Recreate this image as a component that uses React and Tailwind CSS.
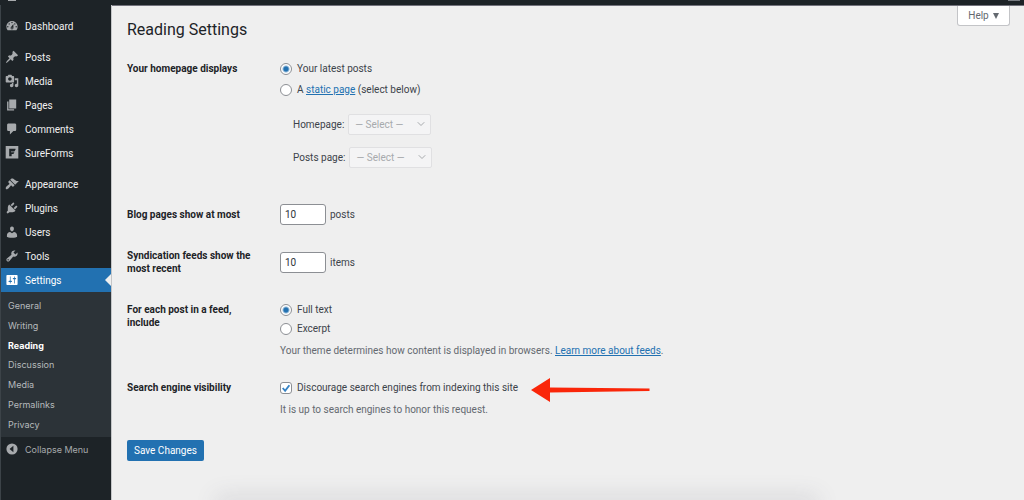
import { ChevronDown } from "lucide-react";

const icons = {
  dashboard:
    "M3.76 16h12.48c1.1-1.37 1.76-3.11 1.76-5 0-4.42-3.58-8-8-8s-8 3.58-8 8c0 1.89.66 3.63 1.76 5zM10 4c.55 0 1 .45 1 1s-.45 1-1 1-1-.45-1-1 .45-1 1-1zM6 6c.55 0 1 .45 1 1s-.45 1-1 1-1-.45-1-1 .45-1 1-1zm8 0c.55 0 1 .45 1 1s-.45 1-1 1-1-.45-1-1 .45-1 1-1zm-5.37 5.55L12 7v6c0 1.1-.9 2-2 2s-2-.9-2-2c0-.57.24-1.08.63-1.45zM4 10c.55 0 1 .45 1 1s-.45 1-1 1-1-.45-1-1 .45-1 1-1zm12 0c.55 0 1 .45 1 1s-.45 1-1 1-1-.45-1-1 .45-1 1-1zm-5 3c0-.55-.45-1-1-1s-1 .45-1 1 .45 1 1 1 1-.45 1-1z",
  posts:
    "M10.44 3.02l1.82-1.82 6.36 6.35-1.83 1.82c-1.05-.68-2.48-.57-3.41.36l-.75.75c-.92.93-1.04 2.35-.35 3.41l-1.83 1.82-2.41-2.41-2.8 2.79c-.42.42-3.38 2.71-3.8 2.29s1.86-3.39 2.28-3.81l2.79-2.79L4.1 9.36l1.83-1.82c1.05.69 2.48.57 3.4-.36l.75-.75c.93-.92 1.05-2.35.36-3.41z",
  media:
    "M13 11V4c0-.55-.45-1-1-1h-1.67L9 1H5L3.67 3H2c-.55 0-1 .45-1 1v7c0 .55.45 1 1 1h10c.55 0 1-.45 1-1zM7 4.5c1.38 0 2.5 1.12 2.5 2.5S8.38 9.5 7 9.5 4.5 8.38 4.5 7 5.62 4.5 7 4.5zM14 6h5v10.5c0 1.38-1.12 2.5-2.5 2.5S14 17.88 14 16.5s1.12-2.5 2.5-2.5c.17 0 .34.02.5.05V9h-3V6zm-4 8.05V13h2v3.5c0 1.38-1.12 2.5-2.5 2.5S7 17.88 7 16.5 8.12 14 9.5 14c.17 0 .34.02.5.05z",
  pages: "M6 15V2h10v13H6zm-1 1h8v2H3V5h2v11z",
  comments: "M5 2h9c1.1 0 2 .9 2 2v7c0 1.1-.9 2-2 2h-2l-5 5v-5H5c-1.1 0-2-.9-2-2V4c0-1.1.9-2 2-2z",
  sureforms: "M1 0h18v18H1zM6 4v10.500h3.500v-3H12l1.500-2.500H8.500V8h4.800L15 5.500V4z",
  appearance:
    "M14.48 11.06L7.41 3.99l1.5-1.5c.5-.56 2.3-.47 3.51.32 1.21.8 1.43 1.28 2.91 2.1 1.18.64 2.45 1.26 4.45.85zm-.71.71L6.7 4.7 4.93 6.47c-.39.39-.39 1.02 0 1.41l1.06 1.06c.39.39.39 1.03 0 1.42-.6.6-1.43 1.11-2.21 1.69-.35.26-.7.53-1.01.84C1.43 14.23.4 16.08 1.4 17.07c.99 1 2.84-.03 4.18-1.36.31-.31.58-.66.85-1.02.57-.78 1.08-1.61 1.69-2.21.39-.39 1.02-.39 1.41 0l1.06 1.06c.39.39 1.02.39 1.41 0z",
  plugins:
    "M13.11 4.36L9.87 7.6 8 5.73l3.24-3.24c.35-.34 1.05-.2 1.56.32.52.51.66 1.21.31 1.55zm-8 1.77l.91-1.12 9.01 9.01-1.19.84c-.71.71-2.63 1.16-3.82 1.16H6.14L4.9 17.26c-.59.59-1.54.59-2.12 0-.59-.58-.59-1.53 0-2.12l1.24-1.24v-3.88c0-1.13.4-3.19 1.09-3.89zm7.26 3.97l3.24-3.24c.34-.35 1.04-.21 1.55.31.52.51.66 1.21.31 1.55l-3.24 3.25z",
  users:
    "M10 9.25c-2.27 0-2.73-3.44-2.73-3.44C7 4.02 7.82 2 9.97 2c2.16 0 2.98 2.02 2.71 3.81 0 0-.41 3.44-2.68 3.44zm0 2.57L12.72 10c2.39 0 4.52 2.33 4.52 4.53v2.49s-3.65 1.13-7.24 1.13c-3.65 0-7.24-1.13-7.24-1.13v-2.49c0-2.25 1.94-4.48 4.47-4.48z",
  tools:
    "M16.68 9.77c-1.34 1.34-3.3 1.67-4.95.99l-5.41 6.52c-.99.99-2.59.99-3.58 0s-.99-2.59 0-3.57l6.52-5.42c-.68-1.65-.35-3.61.99-4.95 1.28-1.28 3.12-1.62 4.72-1.06l-2.89 2.89 2.82 2.82 2.86-2.87c.53 1.58.18 3.39-1.08 4.65zM3.81 16.21c.4.39 1.04.39 1.43 0 .4-.4.4-1.04 0-1.43-.39-.4-1.03-.4-1.43 0-.39.39-.39 1.03 0 1.43z",
  settings:
    "M18 16V4c0-.55-.45-1-1-1H3c-.55 0-1 .45-1 1v12c0 .55.45 1 1 1h14c.55 0 1-.45 1-1zM8 11h1c.55 0 1 .45 1 1s-.45 1-1 1H8v1.500c0 .28-.22.5-.5.5s-.5-.22-.5-.5V13H6c-.55 0-1-.45-1-1s.45-1 1-1h1V5.500c0-.28.22-.5.5-.5s.5.22.5.5V11zm5-2h-1c-.55 0-1-.45-1-1s.45-1 1-1h1V5.500c0-.28.22-.5.5-.5s.5.22.5.5V7h1c.55 0 1 .45 1 1s-.45 1-1 1h-1v5.500c0 .28-.22.5-.5.5s-.5-.22-.5-.5V9z",
  collapse: "M10 2a8 8 0 1 0 0 16 8 8 0 0 0 0-16zM12 5.500v9L6.500 10z",
};

const menuGroups = [
  [{ label: "Dashboard", icon: "dashboard" }],
  [
    { label: "Posts", icon: "posts" },
    { label: "Media", icon: "media" },
    { label: "Pages", icon: "pages" },
    { label: "Comments", icon: "comments" },
    { label: "SureForms", icon: "sureforms" },
  ],
  [
    { label: "Appearance", icon: "appearance" },
    { label: "Plugins", icon: "plugins" },
    { label: "Users", icon: "users" },
    { label: "Tools", icon: "tools" },
    { label: "Settings", icon: "settings", current: true },
  ],
];

const submenu = ["General", "Writing", "Reading", "Discussion", "Media", "Permalinks", "Privacy"];

const Icon = ({ name }) => (
  <svg viewBox="0 0 20 20" className="h-3.5 w-3.5 shrink-0" fill="currentColor" fillRule="evenodd" aria-hidden="true">
    <path d={icons[name]} />
  </svg>
);

const MenuItem = ({ label, icon, current }) => (
  <li>
    <a
      href="#"
      className={
        current
          ? "relative flex h-6 items-center gap-1.5 bg-[#2271b1] pl-1 text-white"
          : "flex h-6 items-center gap-1.5 pl-1 text-[#f0f0f1]"
      }
    >
      <span className={current ? "text-white" : "text-[#a7aaad]"}>
        <Icon name={icon} />
      </span>
      {label}
      {current && (
        <svg viewBox="0 0 6 12" className="absolute top-1.5 right-0 h-3 w-1.5" fill="#efefef" aria-hidden="true">
          <path d="M6 0v12L0 6z" />
        </svg>
      )}
    </a>
  </li>
);

const Sidebar = () => (
  <nav className="w-28 shrink-0 border-r border-l border-r-[#c4c6c8] border-l-[#3c4348] bg-[#1d2327] pt-[9px]">
    {menuGroups.map((group) => (
      <ul key={group[0].label} className="pb-[7px] last-of-type:pb-0">
        {group.map((item) => (
          <MenuItem key={item.label} {...item} />
        ))}
      </ul>
    ))}
    <div className="bg-[#2c3338] pt-1 pb-[3px]">
      <ul className="grid h-[138px] auto-rows-fr font-[Inter,'Liberation_Sans',sans-serif]">
        {submenu.map((label) => (
          <li key={label} className="flex items-center">
            <a href="#" className={label === "Reading" ? "pl-[7px] text-[9px] font-bold text-white" : "pl-[7px] text-[9px] text-[#b6babd]"}>
              {label}
            </a>
          </li>
        ))}
      </ul>
    </div>
    <button
      type="button"
      className="flex h-6 w-full items-center gap-1.5 pl-1 font-[Inter,'Liberation_Sans',sans-serif] text-[9px] text-[#a7aaad]"
    >
      <Icon name="collapse" />
      Collapse Menu
    </button>
  </nav>
);

const Radio = ({ id, name, defaultChecked }) => (
  <input
    type="radio"
    id={id}
    name={name}
    defaultChecked={defaultChecked}
    className="h-3 w-3 shrink-0 appearance-none rounded-full border border-[#8c8f94] bg-white checked:bg-[radial-gradient(circle,#2271b1_2px,white_4px)]"
  />
);

const PageSelect = ({ id, label }) => (
  <div className="flex items-center gap-1">
    <label htmlFor={id}>{label}</label>
    <div className="relative">
      <select
        id={id}
        disabled
        className="block h-[21px] w-[83px] appearance-none rounded-xs border border-[#e0e0e2] bg-[#f4f4f5] pl-1.5 text-[10px] text-[#a7aaad]"
      >
        <option>— Select —</option>
      </select>
      <ChevronDown className="pointer-events-none absolute top-1 right-1 h-3 w-3 text-[#a7aaad]" />
    </div>
  </div>
);

const NumberField = ({ id, unit }) => (
  <div className="flex items-center gap-1">
    <input
      id={id}
      type="text"
      inputMode="numeric"
      defaultValue="10"
      className="h-[21px] w-[46px] rounded-[3px] border border-[#8c8f94] bg-white px-1 text-[10px] text-[#2c3338]"
    />
    <span>{unit}</span>
  </div>
);

const Row = ({ title, children }) => (
  <div className="flex items-start">
    <div className="w-[153px] shrink-0 pr-5 font-bold text-[#1d2327]">{title}</div>
    <div className="grow">{children}</div>
  </div>
);

const Arrow = () => (
  <svg viewBox="0 0 119 24" className="h-6 w-[119px] shrink-0" fill="#fa2609" aria-hidden="true">
    <path d="M0 12L19 0v9.500l99.500 1v2.500L19 14.500V24z" />
  </svg>
);

const ReadingSettings = () => (
  <form className="pt-4 pl-[15px]" onSubmit={(e) => e.preventDefault()}>
    <h1 className="text-base leading-4 text-[#1d2327]">Reading Settings</h1>

    <div className="pt-6">
      <Row title="Your homepage displays">
        <div className="flex items-center gap-[5px]">
          <Radio id="latest" name="front" defaultChecked />
          <label htmlFor="latest">Your latest posts</label>
        </div>
        <div className="mt-2 flex items-center gap-[5px]">
          <Radio id="static" name="front" />
          <label htmlFor="static">
            A <a href="#" className="text-[#2271b1] underline">static page</a> (select below)
          </label>
        </div>
        <div className="flex flex-col gap-3 pt-[18px] pl-[13px]">
          <PageSelect id="homepage" label="Homepage:" />
          <PageSelect id="posts-page" label="Posts page:" />
        </div>
      </Row>
    </div>

    <div className="flex items-center pt-9">
      <label htmlFor="blog-pages" className="w-[153px] font-bold text-[#1d2327]">
        Blog pages show at most
      </label>
      <NumberField id="blog-pages" unit="posts" />
    </div>

    <div className="flex items-center pt-6">
      <label htmlFor="feeds" className="w-[153px] pr-5 font-bold text-[#1d2327]">
        Syndication feeds show the most recent
      </label>
      <NumberField id="feeds" unit="items" />
    </div>

    <div className="pt-7">
      <Row title="For each post in a feed, include">
        <div className="flex items-center gap-[5px]">
          <Radio id="full" name="feed" defaultChecked />
          <label htmlFor="full">Full text</label>
        </div>
        <div className="mt-1.5 flex items-center gap-[5px]">
          <Radio id="excerpt" name="feed" />
          <label htmlFor="excerpt">Excerpt</label>
        </div>
        <p className="mt-[9px] text-[#646970]">
          Your theme determines how content is displayed in browsers.{" "}
          <a href="#" className="text-[#2271b1] underline">Learn more about feeds</a>.
        </p>
      </Row>
    </div>

    <div className="pt-6">
      <Row title="Search engine visibility">
        <div className="flex h-[13px] items-center gap-[5px]">
          <span className="relative flex">
            <input
              type="checkbox"
              id="visibility"
              defaultChecked
              className="h-3 w-3 appearance-none rounded-[3px] border border-[#8c8f94] bg-white"
            />
            <svg viewBox="0 0 11 11" className="pointer-events-none absolute inset-0 h-3 w-3" fill="none" stroke="#3582c4" strokeWidth="1.700" aria-hidden="true">
              <path d="M2.500 5.500l2.200 2.600L8.600 3" />
            </svg>
          </span>
          <label htmlFor="visibility">Discourage search engines from indexing this site</label>
          <span className="pt-1 pl-2">
            <Arrow />
          </span>
        </div>
        <p className="mt-[9px] text-[#646970]">It is up to search engines to honor this request.</p>
      </Row>
    </div>

    <button type="submit" className="mt-6 h-[21px] rounded-xs bg-[#2271b1] px-[7px] text-[10px] text-white">
      Save Changes
    </button>
  </form>
);

const App = () => (
  <div className="relative flex min-h-screen flex-col overflow-hidden bg-[#efefef] font-[Roboto,'Liberation_Sans',sans-serif] text-[10px] leading-[13px] text-[#3c434a]">
    {/* tail end of the admin bar */}
    <header className="flex h-[5px] items-start justify-between bg-[#1d2327] pr-1 pl-2">
      <span className="h-px w-2 bg-[#a7aaad]" />
      <span className="h-px w-3 bg-[#787c82]" />
    </header>
    <div className="flex grow">
      <Sidebar />
      <main className="relative grow border-t border-[#72727c]">
        <ReadingSettings />
        <button
          type="button"
          className="absolute top-0 right-3.5 flex h-5 w-[53px] items-center justify-center gap-1 rounded-b-[3px] border border-t-0 border-[#c3c4c7] bg-white text-[10px] text-[#646970]"
        >
          Help
          <svg viewBox="0 0 6 6" className="h-1.5 w-1.5" fill="currentColor" aria-hidden="true">
            <path d="M0 0h6L3 6z" />
          </svg>
        </button>
      </main>
    </div>
    <div className="absolute right-[210px] -bottom-2 left-[220px] h-2 shadow-[0_0_22px_4px_rgba(80,80,100,0.15)]" />
  </div>
);

export default App;
